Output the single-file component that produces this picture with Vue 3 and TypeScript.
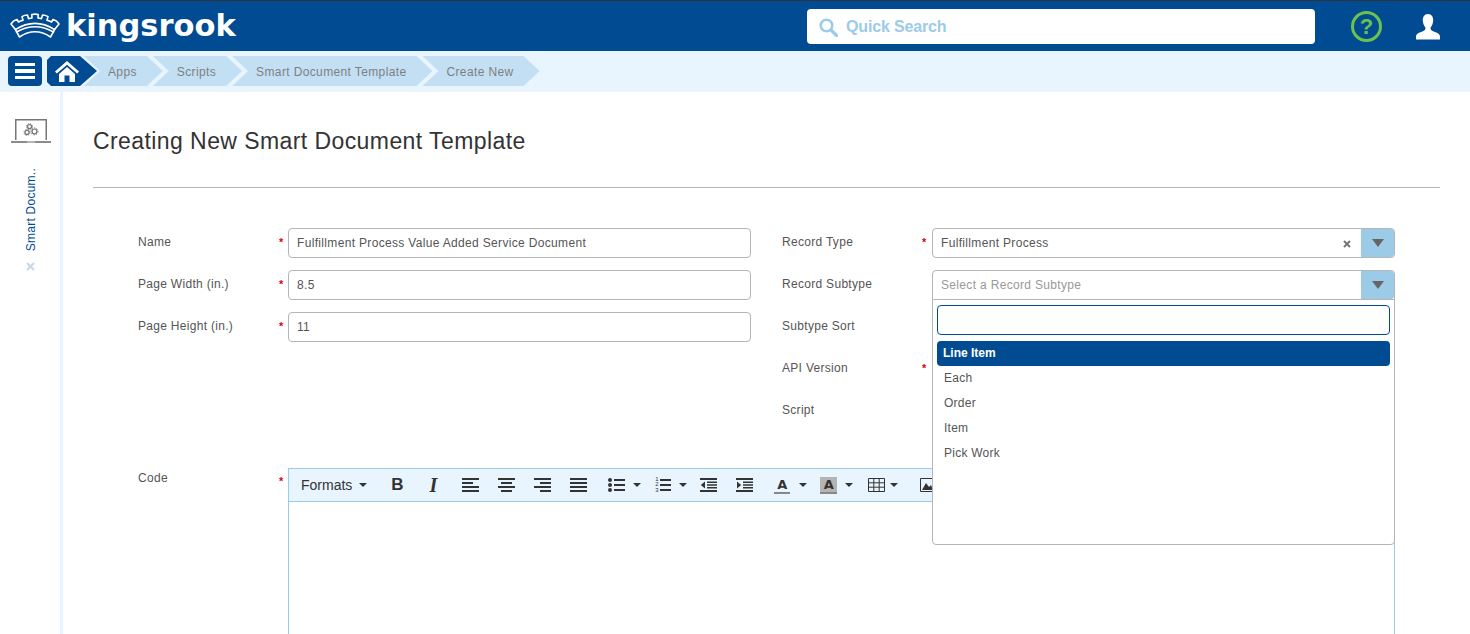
<script setup lang="ts">
const crumbs: string[] = ['Apps', 'Scripts', 'Smart Document Template', 'Create New']
const options: string[] = ['Line Item', 'Each', 'Order', 'Item', 'Pick Work']
</script>

<template>
  <div class="app">
    <header class="topbar">
      <div class="brand">
        <svg class="crown" width="50" height="26" viewBox="0 0 50 26" fill="none" stroke="#fff" stroke-linejoin="round" stroke-linecap="round">
          <path stroke-width="1.6" d="M1 11 Q3 7.5 7 6.5 L8.5 9 Q10.5 8 13 7.3 L12 3.6 Q14.5 2 17.5 2 L18.5 5.6 Q20.5 5.1 22 5 L21.8 1.6 Q25 .6 28.2 1.6 L28 5 Q29.5 5.1 31.5 5.6 L32.5 2 Q35.5 2 38 3.6 L37 7.3 Q39.5 8 41.5 9 L43 6.5 Q47 7.5 49 11 L44.6 16.6 Q25 4.2 5.4 16.6 Z" />
          <path stroke-width="1.6" d="M6.5 19 Q25 8.5 43.5 19" />
          <path stroke-width="1.6" d="M5.4 16.6 L9.5 24 Q25 13.5 40.5 24 L44.6 16.6" />
        </svg>
        <span class="wordmark">kingsrook</span>
      </div>
      <div class="search">
        <svg width="19" height="19" viewBox="0 0 19 19" fill="none" stroke="#9ccbe8">
          <circle cx="7.5" cy="7.5" r="5.8" stroke-width="2.6" />
          <path d="M12 12 L17.5 17.5" stroke-width="3.2" stroke-linecap="round" />
        </svg>
        <span class="search-text">Quick Search</span>
      </div>
      <div class="help"><span>?</span></div>
      <svg class="user" width="24" height="26" viewBox="0 0 24 26" fill="#fff">
        <path d="M12 0 C8.3 0 6.6 3 6.8 6.5 C7 10 8.2 12 9.4 13.4 L9.4 15 C9.2 16.4 7 17.2 4.4 18.2 C1.6 19.3 0 20.6 0 22.6 L0 25.5 L24 25.5 L24 22.6 C24 20.6 22.4 19.3 19.6 18.2 C17 17.2 14.8 16.4 14.6 15 L14.6 13.4 C15.8 12 17 10 17.2 6.5 C17.4 3 15.7 0 12 0 Z" />
      </svg>
    </header>

    <nav class="crumbbar">
      <div class="menu-btn"><i></i><i></i><i></i></div>
      <div class="home-btn">
        <svg width="24" height="21" viewBox="0 0 24 21" fill="#fff">
          <path d="M12 0 L24 10.5 L22.2 12.6 L12 3.8 L1.8 12.6 L0 10.5 Z" />
          <path d="M4 13 L12 6 L20 13 L20 21 L14.5 21 L14.5 14.5 L9.5 14.5 L9.5 21 L4 21 Z" />
        </svg>
      </div>
      <div class="crumbs">
        <span v-for="c in crumbs" :key="c" class="crumb">{{ c }}</span>
      </div>
    </nav>

    <div class="body">
      <aside class="side">
        <svg class="laptop" width="40" height="25" viewBox="0 0 40 25" fill="none" stroke="#777">
          <path d="M4.75 21 L4.75 .75 L35.25 .75 L35.25 21" stroke-width="1.5" />
          <path d="M0 23 L40 23" stroke-width="2" stroke="#8c8c8c" />
          <path d="M16 23 L24 23" stroke-width="1" stroke="#ddd" />
          <circle cx="18.5" cy="7.6" r="2" stroke-width="1.2" />
          <circle cx="18.5" cy="7.6" r="3" stroke-width="1" stroke-dasharray="1.2 1.2" />
          <circle cx="16" cy="13.4" r="2" stroke-width="1.2" />
          <circle cx="16" cy="13.4" r="3" stroke-width="1" stroke-dasharray="1.2 1.2" />
          <circle cx="23.5" cy="12.4" r="2.4" stroke-width="1.2" />
          <circle cx="23.5" cy="12.4" r="3.5" stroke-width="1" stroke-dasharray="1.3 1.3" />
        </svg>
        <span class="side-label">Smart Docum..</span>
        <svg class="side-x" width="9" height="9" viewBox="0 0 9 9" stroke="#c6d8e8" stroke-width="2"><path d="M1 1 L8 8 M8 1 L1 8" /></svg>
      </aside>

      <main class="main">
        <h1 class="title">Creating New Smart Document Template</h1>
        <hr class="rule" />
        <section class="form">
          <div class="col">
            <div class="row">
              <label class="lbl">Name</label><span class="star">*</span>
              <div class="input">Fulfillment Process Value Added Service Document</div>
            </div>
            <div class="row">
              <label class="lbl">Page Width (in.)</label><span class="star">*</span>
              <div class="input">8.5</div>
            </div>
            <div class="row">
              <label class="lbl">Page Height (in.)</label><span class="star">*</span>
              <div class="input">11</div>
            </div>
          </div>
          <div class="col col-right">
            <div class="row">
              <label class="lbl">Record Type</label><span class="star">*</span>
              <div class="select">
                <span class="sel-text">Fulfillment Process</span>
                <svg class="clear" width="8" height="8" viewBox="0 0 8 8" stroke="#777" stroke-width="2"><path d="M1 1 L7 7 M7 1 L1 7" /></svg>
                <span class="arrow"><b></b></span>
              </div>
            </div>
            <div class="row">
              <label class="lbl">Record Subtype</label><span class="star"></span>
              <div class="select open">
                <span class="sel-text placeholder">Select a Record Subtype</span>
                <span class="arrow"><b></b></span>
                <div class="dropdown">
                  <div class="dd-search"></div>
                  <div v-for="(o, i) in options" :key="o" class="opt" :class="{ active: i === 0 }">{{ o }}</div>
                </div>
              </div>
            </div>
            <div class="row"><label class="lbl">Subtype Sort</label><span class="star"></span></div>
            <div class="row"><label class="lbl">API Version</label><span class="star">*</span></div>
            <div class="row"><label class="lbl">Script</label><span class="star"></span></div>
          </div>
        </section>

        <section class="code-row">
          <label class="lbl">Code</label><span class="star">*</span>
          <div class="editor">
            <div class="toolbar">
              <span class="formats">Formats</span><b class="caret c-formats"></b>
              <span class="tb tb-b">B</span>
              <span class="tb tb-i">I</span>
              <svg class="ic ic-first" width="17" height="14" viewBox="0 0 17 14" fill="#333"><path d="M0 0h17v2H0zM0 4h11v2H0zM0 8h17v2H0zM0 12h17v2H0z" /></svg>
              <svg class="ic" width="17" height="14" viewBox="0 0 17 14" fill="#333"><path d="M0 0h17v2H0zM3 4h11v2H3zM0 8h17v2H0zM3 12h11v2H3z" /></svg>
              <svg class="ic" width="17" height="14" viewBox="0 0 17 14" fill="#333"><path d="M0 0h17v2H0zM6 4h11v2H6zM0 8h17v2H0zM6 12h11v2H6z" /></svg>
              <svg class="ic" width="17" height="14" viewBox="0 0 17 14" fill="#333"><path d="M0 0h17v2H0zM0 4h17v2H0zM0 8h17v2H0zM0 12h17v2H0z" /></svg>
              <svg class="ic ic-bul" width="17" height="14" viewBox="0 0 17 14" fill="#333"><circle cx="2" cy="2" r="2" /><circle cx="2" cy="7" r="2" /><circle cx="2" cy="12" r="2" /><path d="M6 1h11v2H6zM6 6h11v2H6zM6 11h11v2H6z" /></svg>
              <b class="caret c-list"></b>
              <span class="ic-num"><span class="nums">1<br />2<br />3</span>
                <svg width="11" height="14" viewBox="0 0 11 14" fill="#333"><path d="M0 1h11v2H0zM0 6h11v2H0zM0 11h11v2H0z" /></svg>
              </span>
              <b class="caret c-list"></b>
              <svg class="ic ic-out" width="17" height="14" viewBox="0 0 17 14" fill="#333"><path d="M0 0h17v2H0zM7 3.5h10v1.6H7zM7 6.2h10v1.6H7zM7 8.9h10v1.6H7zM0 12h17v2H0zM5 3.5v7L0.8 7z" /></svg>
              <svg class="ic" width="17" height="14" viewBox="0 0 17 14" fill="#333"><path d="M0 0h17v2H0zM7 3.5h10v1.6H7zM7 6.2h10v1.6H7zM7 8.9h10v1.6H7zM0 12h17v2H0zM1 3.5v7L5.2 7z" /></svg>
              <span class="color-a">A</span><b class="caret c-a"></b>
              <span class="color-a bg">A</span><b class="caret c-a2"></b>
              <svg class="ic ic-table" width="17" height="14" viewBox="0 0 17 14" fill="none" stroke="#333"><path d="M.5.5h16v13H.5zM.5 4.8h16M.5 9.2h16M5.8.5v13M11.2.5v13" /></svg>
              <b class="caret c-table"></b>
              <svg class="ic ic-img" width="14" height="14" viewBox="0 0 14 14"><path d="M.5.5h13v13H.5z" fill="none" stroke="#333" /><path d="M2 12 L6 5 L9 9 L11 7 L13 12Z" fill="#333" /></svg>
            </div>
            <div class="editor-area"></div>
          </div>
        </section>
      </main>
    </div>
  </div>
</template>

<style>
html, body { margin: 0; overflow: hidden; background: #fff; }
</style>

<style scoped>
.app {
  width: 1470px;
  height: 634px;
  overflow: hidden;
  display: flex;
  flex-direction: column;
  font-family: "Liberation Sans", Arial, sans-serif;
  color: #555;
}
.topbar {
  height: 50px;
  flex: none;
  background: #004b91;
  border-top: 1px solid #2f3338;
  display: flex;
  align-items: center;
}
.brand {
  width: 807px;
  flex: none;
  display: flex;
  align-items: center;
  padding-left: 10px;
  box-sizing: border-box;
}
.crown { flex: none; margin-top: -1px; }
.wordmark {
  margin-left: 6px;
  font-family: "DejaVu Sans", sans-serif;
  font-weight: 700;
  font-size: 30.5px;
  line-height: 40px;
  color: #fff;
}
.search {
  width: 508px;
  height: 35px;
  flex: none;
  margin-top: 1px;
  padding-top: 1px;
  background: #fff;
  border-radius: 4px;
  display: flex;
  align-items: center;
  padding-left: 12px;
  box-sizing: border-box;
  gap: 8px;
}
.search-text {
  color: #9ccbe8;
  font-size: 16px;
  font-weight: 700;
  letter-spacing: -0.15px;
}
.help {
  width: 25px;
  height: 25px;
  margin-left: 36px;
  border: 3px solid #6cc24a;
  border-radius: 50%;
  flex: none;
  display: flex;
  align-items: center;
  justify-content: center;
  color: #6cc24a;
  font-size: 22px;
  line-height: 25px;
  font-weight: 700;
}
.user { margin-left: 34px; margin-top: 1px; flex: none; }

.crumbbar {
  height: 41px;
  flex: none;
  background: #e9f5fe;
  display: flex;
  align-items: flex-start;
  padding: 5px 0 0 8px;
  box-sizing: border-box;
}
.menu-btn {
  width: 34px;
  height: 30px;
  background: #004b91;
  border-radius: 4px;
  display: flex;
  flex-direction: column;
  align-items: center;
  justify-content: center;
  gap: 3px;
  flex: none;
}
.menu-btn i { width: 20px; height: 3.5px; background: #fff; display: block; }
.home-btn {
  width: 50px;
  height: 30px;
  margin-left: 5px;
  background: #004b91;
  flex: none;
  position: relative;
  z-index: 2;
  clip-path: polygon(4px 0, 33px 0, 50px 15px, 33px 30px, 4px 30px, 0 26px, 0 4px);
  display: flex;
  align-items: center;
  padding-left: 8px;
  box-sizing: border-box;
}
.crumbs { display: flex; margin-left: -13px; }
.crumb {
  height: 30px;
  line-height: 32px;
  background: #c2dff4;
  color: #7f7f7f;
  font-size: 12px;
  letter-spacing: 0.37px;
  padding: 0 26px 0 24px;
  clip-path: polygon(0 0, calc(100% - 16px) 0, 100% 50%, calc(100% - 16px) 100%, 0 100%, 16px 50%);
  margin-right: -10px;
  white-space: nowrap;
}

.body { flex: 1; display: flex; min-height: 0; }
.side {
  width: 60px;
  flex: none;
  border-right: 3px solid #e9f5fe;
  display: flex;
  flex-direction: column;
  align-items: center;
}
.laptop { margin-top: 27px; margin-left: 2px; flex: none; }
.side-label {
  margin-top: 24px;
  margin-left: 1px;
  writing-mode: vertical-rl;
  transform: rotate(180deg);
  color: #004b91;
  font-size: 12px;
  line-height: 14px;
  letter-spacing: 0.25px;
}
.side-x { margin-top: 11px; flex: none; }

.main { flex: 1; min-width: 0; padding: 33px 30px 0; }
.title {
  margin: 0;
  font-size: 23px;
  line-height: 32px;
  font-weight: 400;
  color: #333;
  letter-spacing: 0.42px;
}
.rule { margin: 30px 0 0; border: 0; border-top: 1px solid #b5b5b5; height: 0; }

.form {
  margin: 40px 45px 0;
  display: grid;
  grid-template-columns: 613px 613px;
  column-gap: 31px;
}
.col { display: flex; flex-direction: column; gap: 12px; }
.row { display: flex; height: 30px; align-items: center; }
.lbl {
  width: 141px;
  flex: none;
  font-size: 12px;
  letter-spacing: 0.3px;
  color: #555;
}
.row .lbl { margin-top: -2px; }
.col-right .lbl { width: 140px; }
.star {
  width: 9px;
  flex: none;
  color: #e0000f;
  font-size: 11px;
  font-weight: 700;
  line-height: 12px;
  margin-top: -2px;
}
.col-right .star { width: 10px; }
.input, .select {
  flex: 1;
  height: 30px;
  box-sizing: border-box;
  border: 1px solid #b5b5b5;
  border-radius: 4px;
  font-size: 12px;
  letter-spacing: 0.33px;
  color: #555;
  display: flex;
  align-items: center;
}
.input { padding-left: 8px; }
.select { position: relative; }
.select.open { border-radius: 4px 4px 0 0; }
.sel-text { padding-left: 8px; flex: 1; }
.placeholder { color: #999; }
.clear { margin-right: 10px; margin-top: 1px; flex: none; }
.arrow {
  width: 33px;
  height: 28px;
  flex: none;
  background: #9ccbe8;
  border-radius: 0 3px 3px 0;
  display: flex;
  align-items: center;
  justify-content: center;
}
.arrow b {
  width: 0;
  height: 0;
  border-left: 6px solid transparent;
  border-right: 6px solid transparent;
  border-top: 8px solid #666;
}
.dropdown {
  position: absolute;
  left: -1px;
  right: -1px;
  top: 28px;
  height: 246px;
  box-sizing: border-box;
  background: #fff;
  border: 1px solid #b5b5b5;
  border-radius: 0 0 4px 4px;
  padding: 5px 4px;
  z-index: 10;
}
.dd-search {
  height: 30px;
  box-sizing: border-box;
  border: 1px solid #004b91;
  border-radius: 4px;
  margin-bottom: 6px;
}
.opt {
  height: 25px;
  line-height: 24px;
  padding-left: 7px;
  font-size: 12px;
  letter-spacing: 0.25px;
  color: #555;
  border-radius: 4px;
}
.opt.active { background: #004b91; color: #fff; font-weight: 700; letter-spacing: 0; padding-left: 6px; }

.code-row { margin: 42px 45px 0; display: flex; align-items: flex-start; }
.code-row .lbl { line-height: 20px; }
.code-row .star { line-height: 12px; margin-top: 7px; }
.editor { flex: 1; border: 1px solid #9ccbe8; height: 300px; box-sizing: border-box; }
.toolbar {
  height: 32px;
  background: #e9f5fe;
  border-bottom: 1px solid #9ccbe8;
  display: flex;
  align-items: center;
  padding-left: 12px;
  color: #333;
  overflow: hidden;
}
.formats { font-size: 14px; color: #333; }
.caret {
  width: 0; height: 0; flex: none;
  border-left: 4px solid transparent;
  border-right: 4px solid transparent;
  border-top: 4px solid #333;
}
.c-formats { margin-left: 7px; }
.tb { text-align: center; flex: none; color: #333; }
.tb-b { width: 11px; font-size: 17px; font-weight: 700; margin-left: 24px; }
.tb-i { width: 12px; font-style: italic; font-family: "Liberation Serif", serif; font-weight: 700; margin-left: 25px; font-size: 20px; }
.ic { flex: none; margin-left: 19px; }
.ic-first { margin-left: 23px; }
.ic-bul { margin-left: 21px; }
.c-list { margin-left: 8px; }
.ic-num { display: flex; align-items: center; margin-left: 14px; flex: none; width: 16px; }
.nums { font-size: 6px; line-height: 5.5px; color: #333; width: 5px; }
.ic-out { margin-left: 13px; }
.color-a {
  flex: none;
  width: 16px;
  text-align: center;
  font-family: "DejaVu Sans", sans-serif;
  font-weight: 700;
  font-size: 13px;
  line-height: 15px;
  color: #333;
  border-bottom: 2px solid #888;
  margin-left: 21px;
}
.color-a.bg { width: 17px; background: #b4b4b4; margin-left: 13px; line-height: 15px; }
.c-a { margin-left: 9px; }
.c-a2 { margin-left: 8px; }
.ic-table { margin-left: 15px; }
.c-table { margin-left: 5px; }
.ic-img { margin-left: 22px; }
.editor-area { height: 260px; background: #fff; }
</style>
